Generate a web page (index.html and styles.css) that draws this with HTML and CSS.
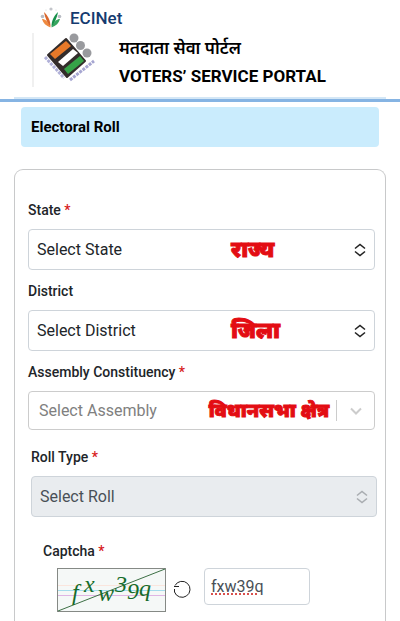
FILE: index.html
```html
<!DOCTYPE html>
<html lang="en">
<head>
<meta charset="utf-8">
<meta name="viewport" content="width=device-width, initial-scale=1">
<title>Voters’ Service Portal</title>
<link rel="stylesheet" href="styles.css">
</head>
<body>
<header class="header">
  <div class="brand">
    <svg class="brand-icon" viewBox="0 0 22 22" aria-hidden="true">
      <path d="M2 12C5 12 8 14 10.500 20.500C6 19 3 16 2 12Z" fill="#ef8a3f"/>
      <path d="M4 5C8 9 10.500 13 10.500 20C8 17 5 11 4 5Z" fill="#d9662c"/>
      <path d="M20 12C17 12 14 14 11.500 20.500C16 19 19 16 20 12Z" fill="#36a55d"/>
      <path d="M18 5C14 9 11.500 13 11.500 20C14 17 17 11 18 5Z" fill="#17904a"/>
      <circle cx="2.500" cy="9.500" r="1.800" fill="#b9bcc4"/>
      <circle cx="19.500" cy="9.500" r="1.800" fill="#b9bcc4"/>
      <circle cx="11" cy="2" r="1.600" fill="#c3c5ca"/>
      <circle cx="6" cy="3" r="0.600" fill="#d0d2d6"/>
      <circle cx="16" cy="3" r="0.600" fill="#d0d2d6"/>
    </svg>
    <span>ECINet</span>
  </div>
  <div class="portal">
    <svg class="portal-logo" viewBox="0 0 52 50" aria-hidden="true">
      <g fill="#999a9e"><circle cx="30" cy="5" r="4.500"/><circle cx="36.500" cy="12.500" r="4.500"/><circle cx="43" cy="20" r="4.500"/></g>
      <path d="M4 22L22 6L41 28L23 44Z" fill="#332c2b" stroke="#332c2b" stroke-width="2" stroke-linejoin="round"/>
      <path d="M6 21L22 8L27 13L11 26Z" fill="#e87929"/>
      <path d="M14 29L29 16L34 20L19 33Z" fill="#fff"/>
      <path d="M20 36L36 23L40 28L24 41Z" fill="#36a348"/>
      <path d="M1 24L20 45" stroke="#b0b0d8" stroke-width="3" stroke-dasharray="3 1"/>
      <path d="M26 47L50 28" stroke="#a6a6d1" stroke-width="3" stroke-dasharray="3 1"/>
    </svg>
    <div class="portal-titles">
      <div class="title-hi" lang="hi">मतदाता सेवा पोर्टल</div>
      <div class="title-en">VOTERS’ SERVICE PORTAL</div>
    </div>
  </div>
</header>
<main class="main">
  <h1 class="banner">Electoral Roll</h1>
  <form class="card">
    <div class="field">
      <label for="state">State <span class="req">*</span></label>
      <div class="control">
        <select id="state"><option>Select State</option></select>
        <span class="note" lang="hi">राज्य</span>
        <svg class="updown" viewBox="0 0 12 14" aria-hidden="true"><path d="M1 5.500L6 1.500L11 5.500M1 8.500L6 12.500L11 8.500"/></svg>
      </div>
    </div>
    <div class="field">
      <label for="district">District</label>
      <div class="control">
        <select id="district"><option>Select District</option></select>
        <span class="note" lang="hi">जिला</span>
        <svg class="updown" viewBox="0 0 12 14" aria-hidden="true"><path d="M1 5.500L6 1.500L11 5.500M1 8.500L6 12.500L11 8.500"/></svg>
      </div>
    </div>
    <div class="field">
      <label for="assembly">Assembly Constituency <span class="req">*</span></label>
      <div class="control">
        <select id="assembly" class="search-select"><option>Select Assembly</option></select>
        <span class="note note-wide" lang="hi">विधानसभा क्षेत्र</span>
        <span class="indicator"><svg viewBox="0 0 12 8" aria-hidden="true"><path d="M1 1.500L6 6.500L11 1.500"/></svg></span>
      </div>
    </div>
    <div class="field field-roll">
      <label for="roll">Roll Type <span class="req">*</span></label>
      <div class="control">
        <select id="roll" disabled><option>Select Roll</option></select>
        <svg class="updown muted" viewBox="0 0 12 14" aria-hidden="true"><path d="M1 5.500L6 1.500L11 5.500M1 8.500L6 12.500L11 8.500"/></svg>
      </div>
    </div>
    <div class="captcha">
      <label for="captcha">Captcha <span class="req">*</span></label>
      <div class="captcha-row">
        <svg class="captcha-image" viewBox="0 0 109 44" role="img" aria-label="Captcha image">
          <rect x="0.500" y="0.500" width="108" height="43" fill="#f5f8f7" stroke="#858985"/>
          <path d="M1 17.500H108" stroke="#fae5dd"/>
          <path d="M1 22.500H108" stroke="#a4dcec"/>
          <path d="M1 27.500H108" stroke="#dfb5e4"/>
          <path d="M1 43L108 1" stroke="#3d7046"/>
          <g class="captcha-glyphs">
            <text x="15" y="32">f</text><text x="27" y="24">x</text><text x="41" y="33">w</text>
            <text x="58" y="24">3</text><text x="70" y="31">9</text><text x="82" y="28">q</text>
          </g>
        </svg>
        <button class="refresh" type="button" aria-label="Refresh captcha">
          <svg viewBox="0 0 18 18" aria-hidden="true"><path d="M1 6.500H6M2 5.500A8 8 0 1 1 1.500 12V9"/></svg>
        </button>
        <input id="captcha" type="text" value="fxw39q">
      </div>
    </div>
  </form>
</main>
</body>
</html>
```
FILE: styles.css
```css
* { box-sizing: border-box; }
body {
  margin: 0;
  min-height: 100vh;
  display: flex;
  flex-direction: column;
  background: #fff;
  color: #212529;
  font-family: Roboto, "Noto Sans", sans-serif;
  font-size: 16px;
}
svg { display: block; }
.header { padding-top: 6px; border-bottom: 3px solid #86b4e3; }
.brand {
  display: flex;
  align-items: center;
  gap: 8px;
  height: 24px;
  padding-left: 40px;
  color: #153b70;
  font-size: 17px;
  font-weight: 500;
}
.brand-icon { width: 22px; height: 22px; }
.portal {
  display: flex;
  gap: 23px;
  margin: 3px 14px 0;
  padding: 0 0 6px 18px;
  border-bottom: 2px solid #d4e7f6;
}
.portal-logo {
  width: 64px;
  height: 54px;
  padding: 0 0 4px 10px;
  border-left: 2px solid #f0f0f0;
}
.portal-titles { padding-top: 2px; color: #000; }
.title-hi { font-family: "Noto Sans", sans-serif; font-size: 17px; font-weight: 600; line-height: 26px; }
.title-en { font-size: 17px; font-weight: 700; line-height: 30px; white-space: nowrap; }
.main { flex: 1; display: flex; flex-direction: column; padding: 5px 14px 0; }
.banner {
  margin: 0 7px 22px;
  padding: 10px;
  border-radius: 4px;
  background: #caecfd;
  color: #000;
  font-size: 15px;
  font-weight: 700;
  line-height: 20px;
}
.card {
  flex: 1;
  display: flex;
  flex-direction: column;
  gap: 11px;
  padding: 30px 10px 8px 13px;
  border: 1px solid #c8c9ca;
  border-bottom: 0;
  border-radius: 9px 9px 0 0;
}
label { display: block; font-size: 14px; font-weight: 500; line-height: 20px; }
.req { color: #d71920; }
.control { position: relative; margin-top: 9px; }
select, input {
  width: 100%;
  border: 1px solid #ced4da;
  border-radius: 4px;
  background: #fff;
  color: #212529;
  font: inherit;
}
select { display: block; appearance: none; height: 41px; padding: 0 30px 0 8px; opacity: 1; }
.search-select { height: 39px; padding-left: 10px; border-color: #ccc; color: #808080; }
select:disabled { background: #e9ecef; color: #495057; }
.updown {
  position: absolute;
  right: 9px;
  top: 14px;
  width: 12px;
  height: 14px;
  fill: none;
  stroke: #222;
  stroke-width: 1.6;
  pointer-events: none;
}
.muted { stroke: #a9adb1; }
.note {
  position: absolute;
  left: 203px;
  top: 3px;
  color: #e30d13;
  font-family: "Noto Sans", sans-serif;
  font-size: 22px;
  font-weight: 900;
  line-height: 32px;
  white-space: nowrap;
  pointer-events: none;
  -webkit-text-stroke: 1px #e30d13;
}
.note-wide { left: auto; right: 46px; font-size: 19px; }
.indicator {
  position: absolute;
  right: 0;
  top: 9px;
  width: 39px;
  height: 21px;
  padding: 7px 13px;
  border-left: 1px solid #ccc;
  pointer-events: none;
}
.indicator svg { width: 12px; height: 8px; fill: none; stroke: #ccc; stroke-width: 2; }
.field-roll { margin: 6px -2px 0 3px; }
.captcha { margin-top: 13px; padding-left: 15px; }
.captcha-row { display: flex; align-items: flex-start; gap: 7px; margin: 7px 0 0 14px; }
.captcha-image { width: 109px; height: 44px; }
.captcha-glyphs {
  fill: #176c2b;
  font-family: "Liberation Serif", serif;
  font-size: 24px;
  font-style: italic;
}
.refresh { margin: 12px 6px 0 0; padding: 0; border: 0; background: none; }
.refresh svg { width: 18px; height: 18px; fill: none; stroke: #222; stroke-width: 1; }
.captcha-row input {
  width: 106px;
  height: 37px;
  padding: 0 6px;
  color: #495057;
  text-decoration: underline dotted #d8504d 2px;
}
```
